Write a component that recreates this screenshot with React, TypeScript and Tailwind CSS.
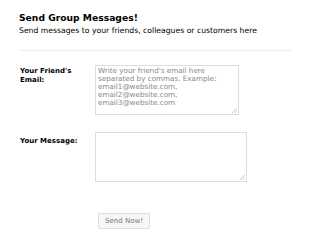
import React from 'react';

const Grip = () => (
    <svg className="absolute right-[2px] bottom-[2px] w-[5px] h-[5px] pointer-events-none" viewBox="0 0 5 5">
        <path d="M5 0 L0 5 M5 2.5 L2.5 5" stroke="#bbbbbb" strokeWidth="0.8" />
    </svg>
);

export default function App() {
    return (
        <div className="w-[310px] h-[234px] bg-white font-['DejaVu_Sans',Verdana,sans-serif] text-black">
            <div className="pl-[19px] pr-[18px] pt-[12px]">
                {/* Header */}
                <h1 className="text-[9.2px] font-bold leading-[12px]">Send Group Messages!</h1>
                <p className="text-[7.7px] leading-[12px] mt-[1px]">Send messages to your friends, colleagues or customers here</p>
                <div className="mt-[13px] h-[1px] bg-[#eeeeee]" />

                {/* Form */}
                <div className="mt-[14px] flex">
                    <label className="w-[76px] pl-[1px] pt-[2px] text-[7px] font-bold leading-[9px]">
                        Your Friend's
                        <br />
                        Email:
                    </label>
                    <div className="relative">
                        <textarea
                            className="block w-[144px] h-[50px] border border-[#dddddd] px-[2px] py-[1px] text-[7.2px] leading-[8px] text-[#555] placeholder:text-[#888] resize-none outline-none"
                            placeholder={'Write your friend\'s email here separated by commas. Example: email1@website.com,\nemail2@website.com,\nemail3@website.com'}
                        />
                        <Grip />
                    </div>
                </div>

                <div className="mt-[17px] flex">
                    <label className="w-[76px] pl-[1px] pt-[5px] text-[7px] font-bold leading-[9px]">Your Message:</label>
                    <div className="relative">
                        <textarea className="block w-[152px] h-[50px] border border-[#dddddd] px-[2px] py-[1px] text-[7.2px] leading-[8px] resize-none outline-none" />
                        <Grip />
                    </div>
                </div>

                <div className="mt-[24px] pl-[79px]">
                    <button className="w-[52px] h-[16px] border border-[#dddddd] bg-[#f6f6f6] text-[7px] text-[#777] rounded-[1px]">
                        Send Now!
                    </button>
                </div>
            </div>
        </div>
    );
}
